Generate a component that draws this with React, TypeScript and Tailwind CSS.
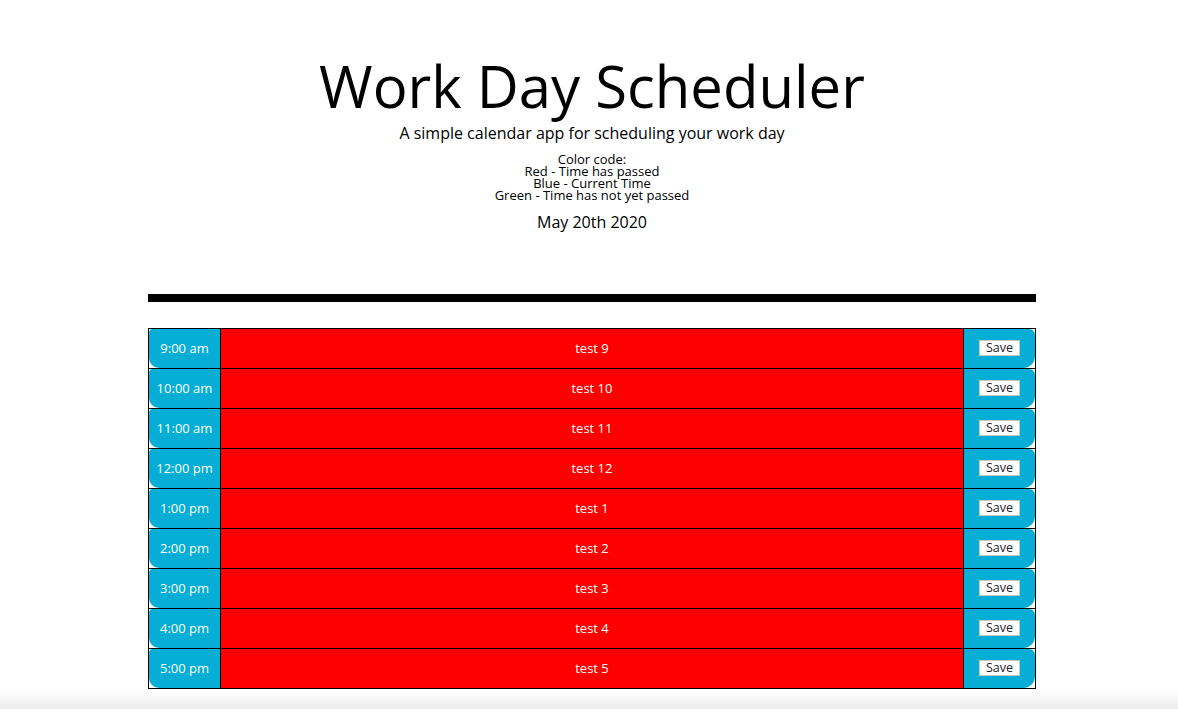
const hours = [
  { time: "9:00 am", text: "test 9" },
  { time: "10:00 am", text: "test 10" },
  { time: "11:00 am", text: "test 11" },
  { time: "12:00 pm", text: "test 12" },
  { time: "1:00 pm", text: "test 1" },
  { time: "2:00 pm", text: "test 2" },
  { time: "3:00 pm", text: "test 3" },
  { time: "4:00 pm", text: "test 4" },
  { time: "5:00 pm", text: "test 5" },
];

const App = () => {
  return (
    <div className="min-h-[709px] bg-white font-['Open_Sans',sans-serif] text-black">
      <div className="pl-[6px]">
        {/* Header */}
        <header className="flex flex-col items-center pt-[46px] text-center">
          <h1 className="text-[58px] font-normal leading-[80px]">Work Day Scheduler</h1>
          <p className="mt-[-5px] text-[16px] leading-[24px]">A simple calendar app for scheduling your work day</p>
          <div className="mt-[8px] text-[13px] leading-[12px]">
            <div>Color code:</div>
            <div>Red - Time has passed</div>
            <div>Blue - Current Time</div>
            <div>Green - Time has not yet passed</div>
          </div>
          <p className="mt-[9px] text-[16px] leading-[24px]">May 20th 2020</p>
        </header>

        <div className="mx-auto mt-[60px] h-[8px] w-[888px] bg-black" />

        {/* Time blocks */}
        <div className="mx-auto mt-[26px] w-[888px] border-l border-r border-t border-black">
          {hours.map((h) => (
            <div key={h.time} className="flex h-[40px] border-b border-black">
              <div className="flex w-[71px] items-center justify-center rounded-tl-[4px] rounded-bl-[10px] bg-[#06aed5] text-[13px] text-white">
                {h.time}
              </div>
              <div className="flex flex-1 items-center justify-center border-l border-r border-black bg-[#ff0000] text-[13px] text-white">
                {h.text}
              </div>
              <div className="flex w-[71px] items-center justify-center rounded-tr-[6px] rounded-br-[12px] bg-[#06aed5]">
                <button className="mt-[-2px] h-[16px] border border-[#c8c8c8] bg-white px-[6px] text-[12.5px] leading-[14px] text-[#222]">
                  Save
                </button>
              </div>
            </div>
          ))}
        </div>
      </div>

      <div className="mt-[1px] h-[19px] bg-gradient-to-b from-white to-[#ececec]" />
    </div>
  );
};

export default App;
